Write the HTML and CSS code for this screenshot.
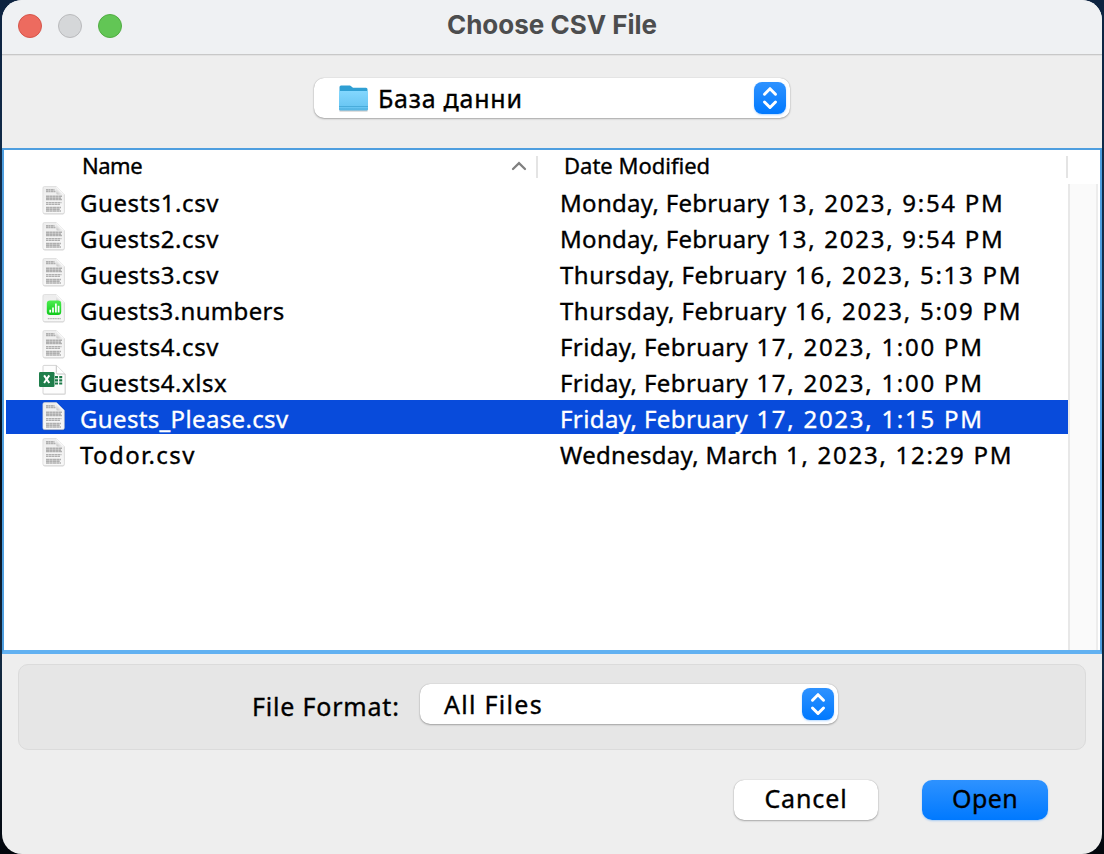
FILE: index.html
```html
<!DOCTYPE html>
<html lang="en">
<head>
<meta charset="utf-8">
<title>Choose CSV File</title>
<link rel="stylesheet" href="styles.css">
</head>
<body>
<svg class="defs" width="0" height="0" aria-hidden="true">
  <defs>
    <linearGradient id="paper" x1="0" y1="0" x2="0" y2="1"><stop offset="0" stop-color="#ededed"/><stop offset="1" stop-color="#f8f8f8"/></linearGradient>
    <linearGradient id="fold" x1="0" y1="1" x2="1" y2="0"><stop offset="0" stop-color="#bdbdbd"/><stop offset=".5" stop-color="#fff"/></linearGradient>
    <linearGradient id="green" x1="0" y1="0" x2="0" y2="1"><stop offset="0" stop-color="#4dee50"/><stop offset="1" stop-color="#10c91c"/></linearGradient>
    <linearGradient id="folder" x1="0" y1="0" x2="0" y2="1"><stop offset="0" stop-color="#83d7fe"/><stop offset="1" stop-color="#63c2f0"/></linearGradient>
    <symbol id="sheet" viewBox="0 0 26 32">
      <path d="M4 2.4h12l7.6 7.6v17.5a2 2 0 0 1-2 2H4a2 2 0 0 1-2-2V4.400a2 2 0 0 1 2-2z" fill="#000" opacity=".16"/>
      <path d="M3.500 1.500h11.800l8 8v17.500a1.600 1.600 0 0 1-1.600 1.600H3.500a1.600 1.600 0 0 1-1.600-1.600V3.100a1.600 1.600 0 0 1 1.600-1.600z" fill="url(#paper)" stroke="#d4d4d4" stroke-width=".6"/>
      <path d="M15.300 1.500l8 8h-6.500a1.500 1.500 0 0 1-1.500-1.500z" fill="url(#fold)"/>
    </symbol>
    <symbol id="csv" viewBox="0 0 26 32">
      <use href="#sheet"/>
      <g fill="none" stroke="#b0b0b0" stroke-width="1.500">
        <path d="M5 4.700h8.500M5 6.500h9.500" stroke-dasharray="2.600 .3 1.700 .4"/>
        <path d="M5 11.200h16M5 12.900h15M5 14.600h16" stroke-dasharray="3.400 .3 2.300 .3"/>
        <path d="M5 17.700h15.500M5 19.300h14" stroke-dasharray="2 .4 3.300 .3" stroke-width="1.200"/>
        <path d="M5 22.500h15M5 24.300h14M5 26.100h15" stroke-dasharray="3.700 .3 2.400 .3"/>
      </g>
    </symbol>
    <symbol id="numbers" viewBox="0 0 26 32">
      <use href="#sheet"/>
      <rect x="5.800" y="7.500" width="14.400" height="14.500" rx="3.200" fill="url(#green)"/>
      <path d="M9.200 19.400v-2.600M12 19.400v-5M14.900 19.400v-9M17.600 19.400v-6.600" stroke="#fff" stroke-width="1.700"/>
      <path d="M6.800 25.600h13" stroke="#b5b5b5" stroke-width="1.300" stroke-dasharray="1.300 .4"/>
    </symbol>
    <symbol id="xlsx" viewBox="0 0 28 34">
      <path d="M5 2h13l8.500 8.500V30.500H5a1 1 0 0 1-1-1V3a1 1 0 0 1 1-1z" fill="#aaa" opacity=".5"/>
      <path d="M5 1.400h12.500l8.600 8.600v19.200a.8.8 0 0 1-.8.8H5a1 1 0 0 1-1-1V2.400a1 1 0 0 1 1-1z" fill="#fdfdfd" stroke="#cfcfcf" stroke-width=".9"/>
      <path d="M17.300 1.500v7a1.500 1.500 0 0 0 1.500 1.500h7.200" fill="#fff" stroke="#c4c4c4" stroke-width="1"/>
      <path d="M16 12h3v2.200h-3zM20.200 12h3v2.200h-3zM16 15.200h3v2.200h-3zM20.200 15.200h3v2.200h-3zM16 18.400h3v2.200h-3zM20.200 18.400h3v2.200h-3z" fill="#1d7a49"/>
      <rect x="0" y="8" width="15.500" height="15" rx="1.200" fill="#1f7e4b"/>
      <path d="M5.100 11.400l5.200 7.600M10.300 11.400l-5.200 7.600" stroke="#fff" stroke-width="2"/>
    </symbol>
    <symbol id="chevrons" viewBox="0 0 32 32">
      <path d="M10.500 12.200L16 6.700l5.500 5.500M10.500 20L16 25.500l5.500-5.500" fill="none" stroke="#fff" stroke-width="3" stroke-linecap="round" stroke-linejoin="round"/>
    </symbol>
  </defs>
</svg>
<main class="window">
  <header class="titlebar">
    <div class="lights"><i class="light close"></i><i class="light min"></i><i class="light max"></i></div>
    <h1 class="title">Choose CSV File</h1>
  </header>
  <section class="location">
    <div class="select path-select">
      <svg class="folder" viewBox="0 0 32 30">
        <path d="M3 2.500h8.200c1 0 1.500.3 2.200 1l1.600 1.300H28a1.500 1.500 0 0 1 1.500 1.500v20H1.500V4A1.500 1.500 0 0 1 3 2.500z" fill="#2f9fd3"/>
        <path d="M1.500 27.500h28" stroke="#000" stroke-opacity=".25" stroke-width="2"/>
        <path d="M2.500 8h27a.8.800 0 0 1 .5.800V26a1.500 1.500 0 0 1-1.500 1.500h-26A1.500 1.500 0 0 1 1 26V8.800A.8.800 0 0 1 1.500 8z" fill="url(#folder)"/>
        <path d="M1 23.500h29M1 26h29" stroke="#45a9d8" stroke-width=".9"/>
      </svg>
      <span class="path-name">База данни</span>
      <span class="stepper"><svg><use href="#chevrons"/></svg></span>
    </div>
  </section>
  <section class="list">
    <div class="list-head">
      <span class="head-name">Name</span>
      <svg class="sort" viewBox="0 0 18 12"><path d="M3 9l6-5.800L15 9" fill="none" stroke="#808080" stroke-width="2.300" stroke-linecap="round"/></svg>
      <i class="divider"></i>
      <span class="head-date">Date Modified</span>
      <i class="divider"></i>
    </div>
    <div class="list-body">
      <div class="rows">
        <div class="row"><svg class="icon"><use href="#csv"/></svg><span class="name">Guests1.csv</span><span class="day">Monday, February </span><span class="time">13, 2023, 9:54 PM</span></div>
        <div class="row"><svg class="icon"><use href="#csv"/></svg><span class="name">Guests2.csv</span><span class="day">Monday, February </span><span class="time">13, 2023, 9:54 PM</span></div>
        <div class="row"><svg class="icon"><use href="#csv"/></svg><span class="name">Guests3.csv</span><span class="day thursday">Thursday, February </span><span class="time">16, 2023, 5:13 PM</span></div>
        <div class="row"><svg class="icon"><use href="#numbers"/></svg><span class="name long">Guests3.numbers</span><span class="day thursday">Thursday, February </span><span class="time">16, 2023, 5:09 PM</span></div>
        <div class="row"><svg class="icon"><use href="#csv"/></svg><span class="name">Guests4.csv</span><span class="day friday">Friday, February </span><span class="time">17, 2023, 1:00 PM</span></div>
        <div class="row"><svg class="icon excel"><use href="#xlsx"/></svg><span class="name">Guests4.xlsx</span><span class="day friday">Friday, February </span><span class="time">17, 2023, 1:00 PM</span></div>
        <div class="row selected"><svg class="icon"><use href="#csv"/></svg><span class="name long">Guests_Please.csv</span><span class="day friday">Friday, February </span><span class="time">17, 2023, 1:15 PM</span></div>
        <div class="row"><svg class="icon"><use href="#csv"/></svg><span class="name wide">Todor.csv</span><span class="day">Wednesday, March </span><span class="time">1, 2023, 12:29 PM</span></div>
      </div>
      <div class="track"></div>
    </div>
  </section>
  <section class="format">
    <span class="format-label">File Format:</span>
    <div class="select format-select">
      <span class="format-name">All Files</span>
      <span class="stepper"><svg><use href="#chevrons"/></svg></span>
    </div>
  </section>
  <footer class="actions">
    <button class="btn cancel">Cancel</button>
    <button class="btn open">Open</button>
  </footer>
</main>
</body>
</html>
```
FILE: styles.css
```css
* { box-sizing: border-box; }
body {
  margin: 0;
  height: 854px;
  padding: 0 2px;
  overflow: hidden;
  background: linear-gradient(#0d2340, #12304f 35%, #030a14 55%, #132a42 78%, #02060c);
  font-family: "Noto Sans", "Open Sans", sans-serif;
  font-weight: 400;
  -webkit-text-stroke: 0.350px;
  color: #000;
}
.defs { position: absolute; }
.window {
  display: flex;
  flex-direction: column;
  width: 1100px;
  height: 854px;
  background: #eee;
  border-radius: 20px;
  overflow: hidden;
}
.titlebar {
  display: grid;
  grid-template-columns: 300px 1fr 300px;
  height: 56px;
  background: #eff1f3;
  border-bottom: 1px solid #e3e3e3;
  box-shadow: inset 0 -1px #c8c8c8;
}
.lights { display: flex; gap: 16px; padding: 14px 0 0 16px; }
.light { width: 24px; height: 24px; border-radius: 50%; border: 1px solid; }
.close { background: #ed6b5f; border-color: #d5554a; }
.min { background: #d5d7d9; border-color: #b9babc; }
.max { background: #62c655; border-color: #51ac42; }
.title {
  margin: 0;
  text-align: center;
  font: 700 26px/50px Inter, sans-serif;
  -webkit-text-stroke: 0;
  color: #4c4d4e;
  white-space: nowrap;
}
.location { height: 92px; padding: 22px 0 0 312px; }
.select {
  display: flex;
  height: 40px;
  padding: 0 4px 0 0;
  border-radius: 10px;
  background: #fff;
  box-shadow: 0 0 1px 0 rgba(0,0,0,.3), 0 1px 2px rgba(0,0,0,.28);
  font-size: 25px;
  line-height: 40px;
  white-space: nowrap;
}
.path-select { width: 476px; padding-left: 24px; }
.folder { width: 32px; height: 30px; margin: 5px 8px 0 0; }
.path-name { letter-spacing: 0.750px; }
.stepper {
  width: 32px;
  height: 32px;
  margin: 4px 0 0 auto;
  border-radius: 8px;
  background: linear-gradient(#2e92ff, #0079ff);
  box-shadow: 0 1px 2px rgba(0,122,255,.3);
}
.stepper svg { display: block; width: 32px; height: 32px; }
.list {
  display: flex;
  flex-direction: column;
  height: 506px;
  border: 2px solid #4e9edf;
  border-bottom: 4px solid #62b1f1;
  background: #fff;
}
.list-head {
  display: flex;
  height: 34px;
  padding-left: 78px;
  font-size: 22px;
  line-height: 31px;
  white-space: nowrap;
}
.head-name { width: 428px; letter-spacing: -0.500px; }
.sort { width: 18px; height: 12px; margin: 10px 8px 0 0; }
.divider { width: 2px; height: 22px; margin-top: 6px; background: #e4e4e4; }
.head-date { width: 528px; padding-left: 26px; }
.list-body { display: flex; flex: 1; }
.rows { display: flex; flex-direction: column; gap: 2px; width: 1064px; padding-left: 2px; }
.row {
  display: flex;
  height: 34px;
  padding-left: 35px;
  font-size: 24px;
  line-height: 37px;
  white-space: pre;
}
.selected { background: #084bdb; color: #fff; }
.icon { flex: none; width: 26px; height: 32px; margin: 1px 13px 0 0; }
.excel { width: 28px; height: 34px; margin: 0 13px 0 -2px; }
.name { width: 480px; letter-spacing: 0.550px; }
.long { letter-spacing: 0.350px; }
.wide { letter-spacing: 1.400px; }
.day { margin-right: 1.500px; letter-spacing: 0.300px; }
.thursday { letter-spacing: 0.500px; }
.friday { letter-spacing: 0.400px; }
.time { letter-spacing: 1.730px; }
.track { width: 30px; background: #fafafa; border-left: 2px solid #e8e8e8; border-right: 2px solid #ededed; }
.format {
  display: flex;
  width: 1068px;
  height: 86px;
  margin: 10px 0 0 16px;
  padding: 19px 0 0 233px;
  border: 1px solid #dbdbdb;
  border-radius: 10px;
  background: #e6e6e6;
}
.format-label { width: 168px; font-size: 25px; line-height: 44px; letter-spacing: 0.800px; white-space: nowrap; }
.format-select { width: 418px; padding-left: 24px; }
.format-name { letter-spacing: 1.300px; }
.actions { display: flex; gap: 44px; padding: 30px 0 0 732px; }
.btn {
  height: 40px;
  padding: 0 0 4px;
  border: 0;
  border-radius: 10px;
  font: inherit;
  font-size: 25px;
  line-height: 36px;
  color: #000;
}
.cancel { width: 144px; letter-spacing: 0.900px; background: #fff; box-shadow: 0 0 1px 0 rgba(0,0,0,.3), 0 1px 2px rgba(0,0,0,.28); }
.open { width: 126px; letter-spacing: 0.400px; background: linear-gradient(#2e92ff, #0079ff); box-shadow: 0 1px 2px rgba(0,122,255,.3); }
```
